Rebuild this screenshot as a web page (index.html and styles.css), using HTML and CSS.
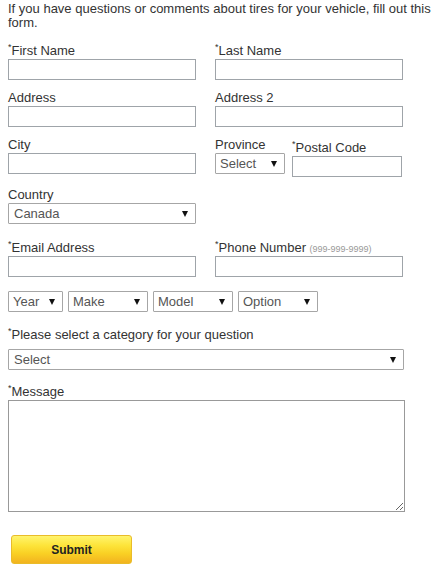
FILE: index.html
```html
<!DOCTYPE html>
<html>
<head>
<meta charset="utf-8">
<link rel="stylesheet" href="styles.css">
</head>
<body>
<form class="form">
  <p class="intro">If you have questions or comments about tires for your vehicle, fill out this form.</p>

  <div class="row">
    <div class="field">
      <label class="lbl"><sup class="req">*</sup>First Name</label>
      <input class="txt" type="text">
    </div>
    <div class="field">
      <label class="lbl"><sup class="req">*</sup>Last Name</label>
      <input class="txt" type="text">
    </div>
  </div>

  <div class="row">
    <div class="field">
      <label class="lbl">Address</label>
      <input class="txt" type="text">
    </div>
    <div class="field">
      <label class="lbl">Address 2</label>
      <input class="txt" type="text">
    </div>
  </div>

  <div class="row">
    <div class="field">
      <label class="lbl">City</label>
      <input class="txt" type="text">
    </div>
    <div class="field split">
      <div class="sub prov">
        <label class="lbl">Province</label>
        <span class="sel w-prov"><select><option>Select</option></select></span>
      </div>
      <div class="sub postal">
        <label class="lbl"><sup class="req">*</sup>Postal Code</label>
        <input class="txt w-postal" type="text">
      </div>
    </div>
  </div>

  <div class="row row-country">
    <div class="field">
      <label class="lbl">Country</label>
      <span class="sel w-field"><select><option>Canada</option></select></span>
    </div>
  </div>

  <div class="row">
    <div class="field">
      <label class="lbl"><sup class="req">*</sup>Email Address</label>
      <input class="txt" type="text">
    </div>
    <div class="field">
      <label class="lbl"><sup class="req">*</sup>Phone Number <span class="hint">(999-999-9999)</span></label>
      <input class="txt" type="text">
    </div>
  </div>

  <div class="vehicle">
    <span class="sel w-year"><select><option>Year</option></select></span>
    <span class="sel w-veh"><select><option>Make</option></select></span>
    <span class="sel w-veh"><select><option>Model</option></select></span>
    <span class="sel w-veh"><select><option>Option</option></select></span>
  </div>

  <div class="cat">
    <label class="lbl"><sup class="req">*</sup>Please select a category for your question</label>
    <span class="sel w-full"><select><option>Select</option></select></span>
  </div>

  <div class="msg">
    <label class="lbl"><sup class="req">*</sup>Message</label>
    <textarea class="area"></textarea>
  </div>

  <button class="submit" type="button">Submit</button>
</form>
</body>
</html>
```

FILE: styles.css
```css
html, body {
  margin: 0;
  padding: 0;
  background: #ffffff;
}
body {
  padding: 0 8px;
  font-family: "Liberation Sans", Arial, sans-serif;
  font-size: 13px;
  color: #333333;
}
.form {
  display: flex;
  flex-direction: column;
  align-items: flex-start;
  width: 430px;
}
.intro {
  margin: 0;
  padding-top: 2px;
  line-height: 14px;
  margin-bottom: 13px;
}
.row {
  display: flex;
  gap: 19px;
  margin-bottom: 10px;
}
.row-country {
  margin-bottom: 16px;
}
.field {
  width: 188px;
  display: flex;
  flex-direction: column;
}
.split {
  flex-direction: row;
  gap: 7px;
}
.sub {
  display: flex;
  flex-direction: column;
}
.postal {
  padding-top: 3px;
}
.lbl {
  display: block;
  line-height: 16px;
  height: 16px;
  white-space: nowrap;
}
.req {
  font-size: 9px;
  line-height: 0;
  vertical-align: 5px;
}
.hint {
  font-size: 9px;
  color: #999999;
}
.txt {
  box-sizing: border-box;
  width: 188px;
  height: 21px;
  margin: 0;
  border: 1px solid #9fa4a9;
  border-radius: 0;
  padding: 0 4px;
  font: inherit;
  background: #fff;
}
.w-postal {
  width: 110px;
}
.sel {
  position: relative;
  display: block;
  height: 21px;
}
.sel select {
  -webkit-appearance: none;
  appearance: none;
  box-sizing: border-box;
  width: 100%;
  height: 21px;
  margin: 0;
  border: 1px solid #a6a6a6;
  border-radius: 1px;
  padding: 0 14px 0 4px;
  background: #ffffff;
  font-family: "Liberation Sans", Arial, sans-serif;
  font-size: 13px;
  color: #555555;
}
.sel::after {
  content: "";
  position: absolute;
  right: 8px;
  top: 8px;
  width: 0;
  height: 0;
  border-left: 3px solid transparent;
  border-right: 3px solid transparent;
  border-top: 6px solid #111111;
  pointer-events: none;
}
.w-prov { width: 70px; }
.w-field { width: 188px; }
.w-year { width: 55px; }
.w-veh { width: 80px; }
.w-full { width: 396px; }
.w-field select, .w-full select { padding-left: 5px; }

.vehicle {
  display: flex;
  gap: 5px;
  margin-top: 4px;
}
.cat {
  margin-top: 15px;
}
.cat .lbl {
  margin-bottom: 6px;
}
.msg {
  margin-top: 14px;
}
.area {
  display: block;
  box-sizing: border-box;
  width: 397px;
  height: 112px;
  margin: 0;
  border: 1px solid #999999;
  padding: 2px;
  font: inherit;
}
.submit {
  margin: 23px 0 0 3px;
  box-sizing: border-box;
  width: 121px;
  height: 29px;
  padding: 0;
  border: 1px solid #e9bc2a;
  border-radius: 3px;
  background: linear-gradient(to bottom, #fff46d 0%, #fde43a 35%, #f9d024 65%, #f2b31f 100%);
  font-family: "Liberation Sans", Arial, sans-serif;
  font-size: 12px;
  font-weight: bold;
  color: #222222;
  cursor: pointer;
}
```
